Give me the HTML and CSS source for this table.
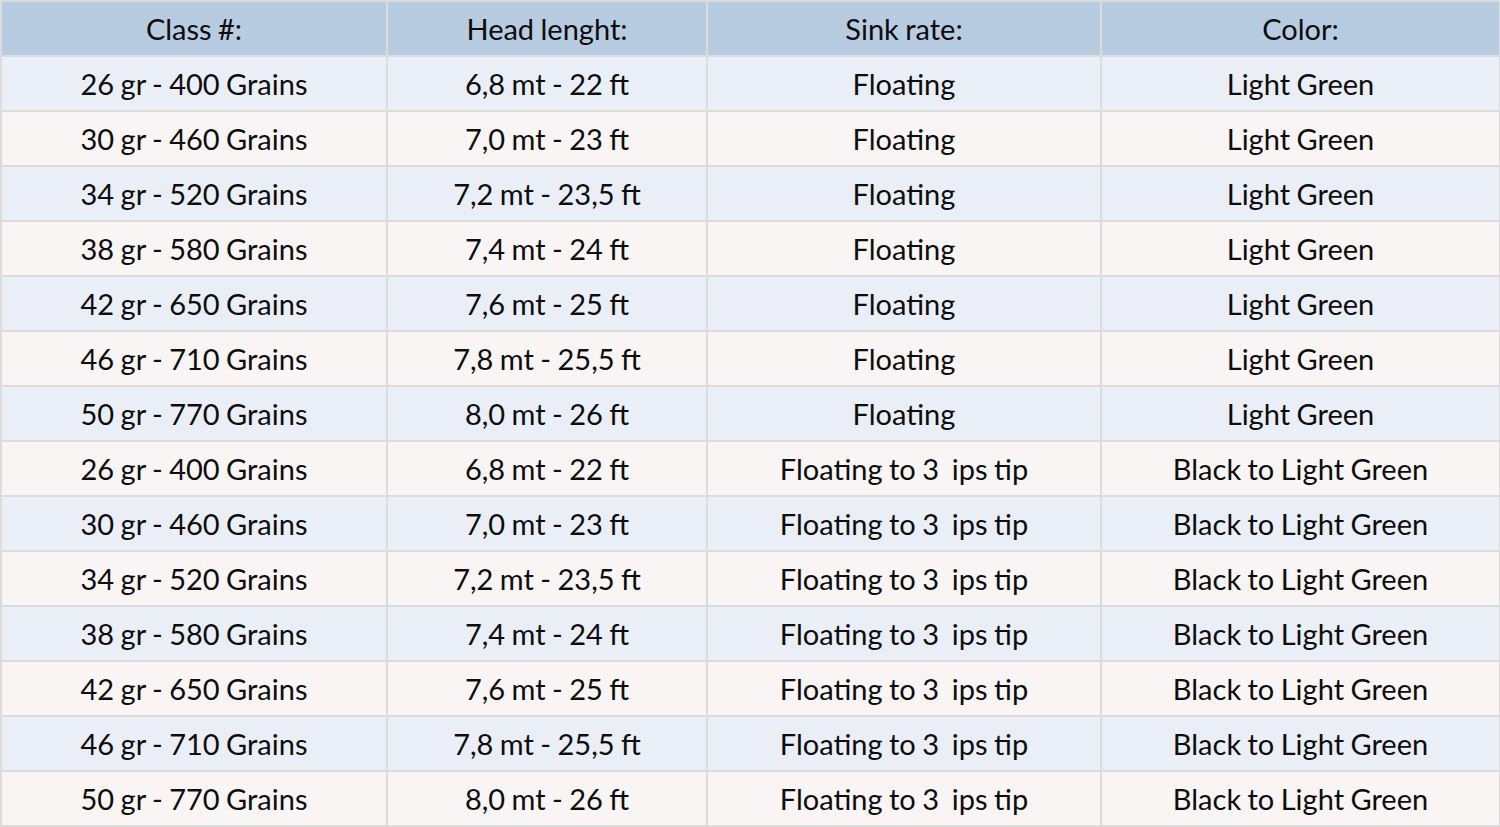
FILE: index.html
```html
<!DOCTYPE html>
<html>
<head>
<meta charset="utf-8">
<link rel="stylesheet" href="styles.css">
</head>
<body>
<table class="spec">
<colgroup><col class="c1"><col class="c2"><col class="c3"><col class="c4"></colgroup>
<thead>
<tr><th>Class #:</th><th>Head lenght:</th><th>Sink rate:</th><th>Color:</th></tr>
</thead>
<tbody>
<tr><td>26 gr - 400 Grains</td><td>6,8 mt - 22 ft</td><td>Floating</td><td>Light Green</td></tr>
<tr><td>30 gr - 460 Grains</td><td>7,0 mt - 23 ft</td><td>Floating</td><td>Light Green</td></tr>
<tr><td>34 gr - 520 Grains</td><td>7,2 mt - 23,5 ft</td><td>Floating</td><td>Light Green</td></tr>
<tr><td>38 gr - 580 Grains</td><td>7,4 mt - 24 ft</td><td>Floating</td><td>Light Green</td></tr>
<tr><td>42 gr - 650 Grains</td><td>7,6 mt - 25 ft</td><td>Floating</td><td>Light Green</td></tr>
<tr><td>46 gr - 710 Grains</td><td>7,8 mt - 25,5 ft</td><td>Floating</td><td>Light Green</td></tr>
<tr><td>50 gr - 770 Grains</td><td>8,0 mt - 26 ft</td><td>Floating</td><td>Light Green</td></tr>
<tr><td>26 gr - 400 Grains</td><td>6,8 mt - 22 ft</td><td>Floating to 3&nbsp; ips tip</td><td>Black to Light Green</td></tr>
<tr><td>30 gr - 460 Grains</td><td>7,0 mt - 23 ft</td><td>Floating to 3&nbsp; ips tip</td><td>Black to Light Green</td></tr>
<tr><td>34 gr - 520 Grains</td><td>7,2 mt - 23,5 ft</td><td>Floating to 3&nbsp; ips tip</td><td>Black to Light Green</td></tr>
<tr><td>38 gr - 580 Grains</td><td>7,4 mt - 24 ft</td><td>Floating to 3&nbsp; ips tip</td><td>Black to Light Green</td></tr>
<tr><td>42 gr - 650 Grains</td><td>7,6 mt - 25 ft</td><td>Floating to 3&nbsp; ips tip</td><td>Black to Light Green</td></tr>
<tr><td>46 gr - 710 Grains</td><td>7,8 mt - 25,5 ft</td><td>Floating to 3&nbsp; ips tip</td><td>Black to Light Green</td></tr>
<tr><td>50 gr - 770 Grains</td><td>8,0 mt - 26 ft</td><td>Floating to 3&nbsp; ips tip</td><td>Black to Light Green</td></tr>
</tbody>
</table>
</body>
</html>
```
FILE: styles.css
```css
html, body {
  margin: 0;
  padding: 0;
  background: #ffffff;
}
.spec {
  width: 1499px;
  border-collapse: collapse;
  table-layout: fixed;
  font-family: Lato, "Liberation Sans", sans-serif;
  font-size: 29px;
  word-spacing: -1px;
  color: #0d0d0d;
}
.c1 { width: 386px; }
.c2 { width: 320px; }
.c3 { width: 394px; }
.c4 { width: 399px; }
.spec th, .spec td {
  border: 2px solid #dcdcdc;
  height: 55px;
  padding: 0;
  box-sizing: border-box;
  text-align: center;
  vertical-align: middle;
  font-weight: 400;
  white-space: nowrap;
}
.spec th {
  background: #b8cce1;
}
.spec tbody tr:nth-child(odd) td {
  background: #eaeef6;
}
.spec tbody tr:nth-child(even) td {
  background: #f8f5f4;
}
```
